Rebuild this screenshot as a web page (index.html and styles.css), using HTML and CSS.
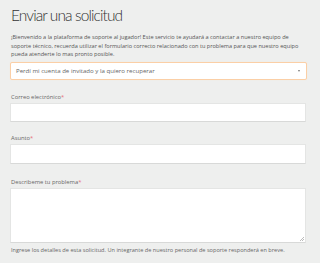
FILE: index.html
```html
<!DOCTYPE html>
<html lang="es">
<head>
<meta charset="utf-8">
<link rel="stylesheet" href="styles.css">
</head>
<body>
<div class="page">
  <h1 class="title">Enviar una solicitud</h1>
  <p class="intro">¡Bienvenido a la plataforma de soporte al jugador! Este servicio te ayudará a contactar a nuestro equipo de soporte técnico, recuerda utilizar el formulario correcto relacionado con tu problema para que nuestro equipo pueda atenderte lo mas pronto posible.</p>
  <div class="select">
    <span class="select-text">Perdí mi cuenta de invitado y la quiero recuperar</span>
    <span class="caret"></span>
  </div>
  <div class="field field-first">
    <label class="label">Correo electrónico<span class="req">*</span></label>
    <div class="input"></div>
  </div>
  <div class="field">
    <label class="label">Asunto<span class="req">*</span></label>
    <div class="input input-tall"></div>
  </div>
  <div class="field field-last">
    <label class="label">Describeme tu problema<span class="req">*</span></label>
    <div class="textarea"><span class="grip"></span></div>
    <p class="help">Ingrese los detalles de esta solicitud. Un integrante de nuestro personal de soporte responderá en breve.</p>
  </div>
</div>
</body>
</html>
```

FILE: styles.css
```css
html, body {
  margin: 0;
  padding: 0;
  background: #eeefee;
}
.page {
  font-family: "Open Sans", "Liberation Sans", sans-serif;
  padding: 3px 13px 0 10px;
  color: #555;
}
.title {
  font-family: Lato, "Open Sans", sans-serif;
  font-weight: 300;
  font-size: 15.5px;
  letter-spacing: -0.9px;
  line-height: 24px;
  margin: 0 0 0 1px;
  color: #333;
}
.intro {
  font-size: 5.6px;
  line-height: 8.5px;
  margin: 6px 0 0 1px;
  color: #555;
}
.select {
  margin-top: 3px;
  height: 16px;
  background: #fff;
  border: 1px solid #fbcfa6;
  border-radius: 2px;
  box-shadow: 0 0 1px #fde3cc;
  display: flex;
  align-items: center;
  justify-content: space-between;
  padding: 0 6px 0 5px;
}
.select-text {
  font-size: 6.1px;
  color: #666;
}
.caret {
  width: 0;
  height: 0;
  border-left: 1.5px solid transparent;
  border-right: 1.5px solid transparent;
  border-top: 2px solid #777;
}
.field {
  margin-top: 12px;
}
.field-first {
  margin-top: 13px;
}
.field-last {
  margin-top: 14px;
}
.label {
  display: block;
  font-size: 5.8px;
  line-height: 8px;
  color: #666;
  margin-left: 1px;
}
.req {
  color: #e8707a;
}
.input {
  margin-top: 2px;
  height: 17px;
  background: #fff;
  border: 1px solid #e4e5e4;
  border-bottom-color: #d8d9d8;
  margin-right: 1px;
}
.input-tall {
  height: 18px;
}
.textarea {
  position: relative;
  margin-top: 2px;
  height: 53px;
  background: #fff;
  border: 1px solid #e4e5e4;
  border-bottom-color: #d8d9d8;
  margin-right: 1px;
}
.grip {
  position: absolute;
  right: 1px;
  bottom: 1px;
  width: 4px;
  height: 4px;
  background: linear-gradient(135deg, transparent 45%, #bbb 45%, #bbb 55%, transparent 55%, transparent 75%, #bbb 75%, #bbb 85%, transparent 85%);
}
.help {
  font-size: 5.6px;
  line-height: 8px;
  margin: 3px 0 0 1px;
  color: #666;
}
```
